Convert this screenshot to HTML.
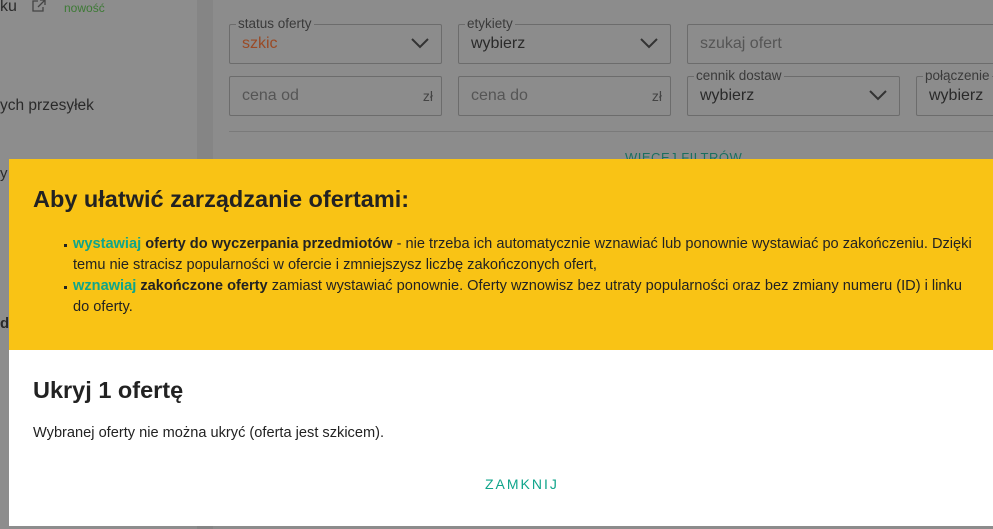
<!DOCTYPE html>
<html><head><meta charset="utf-8"><style>
*{box-sizing:border-box;margin:0;padding:0}
body{width:993px;height:529px;overflow:hidden;position:relative;background:#8c8c8c;font-family:"Liberation Sans","DejaVu Sans",sans-serif;color:#222}
.abs{position:absolute}
.side{left:0;top:0;width:197px;height:529px;background:#8d8d8d}
.gap{left:197px;top:0;width:16px;height:529px;background:#858585}
.fld{position:absolute;border:1px solid #6c6c6c;border-radius:2px;height:40px;font-size:16px;color:#2a2a2a}
.fld .v{position:absolute;left:12px;top:10px}
.fld .lbl{position:absolute;left:6px;top:-9px;background:#8c8c8c;padding:0 2px;font-size:13.5px;color:#3a3a3a}
.fld .ph{color:#555}
.chev{position:absolute;right:12px;top:12px;width:18px;height:12px}
.zl{position:absolute;right:8px;top:11px;font-size:14px;color:#444}
.dlg{left:9px;top:159px;width:984px;height:367px;background:#fff}
.yel{left:0;top:0;width:984px;height:191px;background:#f9c315}
h1{position:absolute;left:24px;top:27px;font-size:23.5px;font-weight:bold;color:#222}
ul{position:absolute;left:64px;top:75px;width:905px;font-size:14.6px;line-height:21px;list-style:none;color:#222}
li{position:relative}
li:before{content:"";position:absolute;left:-9px;top:10px;width:3px;height:3px;background:#222}
.g{color:#10a58b;font-weight:bold}
h2{position:absolute;left:24px;top:218px;font-size:23.5px;font-weight:bold;color:#222}
.p{position:absolute;left:24px;top:266px;font-size:14.6px;color:#222}
.btn{position:absolute;left:476px;top:317px;font-size:14px;letter-spacing:2px;color:#10a58b}
</style></head><body>
<div class="abs side"></div>
<div class="abs gap"></div>
<div class="abs" style="left:0;top:-2px;font-size:16px;color:#2a2a2a">ku</div>
<svg class="abs" style="left:32px;top:0" width="14" height="12" viewBox="0 0 14 12"><path d="M6 1H1v10h10V7M8 0h5v5M13 0L6 7" fill="none" stroke="#444" stroke-width="1.3"/></svg>
<div class="abs" style="left:64px;top:1px;font-size:12px;color:#3d7a35">nowość</div>
<div class="abs" style="left:0;top:97px;font-size:15.5px;color:#2a2a2a">ych przesyłek</div>
<div class="abs" style="left:229px;top:131px;width:764px;height:1px;background:#7a7a7a"></div>
<div class="abs" style="left:625px;top:150px;font-size:13px;color:#1a6f60;letter-spacing:0.5px">WIĘCEJ FILTRÓW</div>

<div class="fld" style="left:229px;top:24px;width:213px"><span class="lbl">status oferty</span><span class="v" style="color:#9a4a25">szkic</span><svg class="chev" viewBox="0 0 18 12"><path d="M1 2l8 8 8-8" fill="none" stroke="#333" stroke-width="2"/></svg></div>
<div class="fld" style="left:458px;top:24px;width:213px"><span class="lbl">etykiety</span><span class="v">wybierz</span><svg class="chev" viewBox="0 0 18 12"><path d="M1 2l8 8 8-8" fill="none" stroke="#333" stroke-width="2"/></svg></div>
<div class="fld" style="left:687px;top:24px;width:320px"><span class="v ph">szukaj ofert</span></div>
<div class="fld" style="left:229px;top:76px;width:213px"><span class="v ph">cena od</span><span class="zl">zł</span></div>
<div class="fld" style="left:458px;top:76px;width:213px"><span class="v ph">cena do</span><span class="zl">zł</span></div>
<div class="fld" style="left:687px;top:76px;width:213px"><span class="lbl">cennik dostaw</span><span class="v">wybierz</span><svg class="chev" viewBox="0 0 18 12"><path d="M1 2l8 8 8-8" fill="none" stroke="#333" stroke-width="2"/></svg></div>
<div class="fld" style="left:916px;top:76px;width:100px"><span class="lbl">połączenie</span><span class="v">wybierz</span></div>

<div class="abs" style="left:0;top:165px;font-size:15px;color:#2a2a2a">y</div>
<div class="abs" style="left:0;top:315px;font-size:15px;font-weight:bold;color:#2a2a2a">d</div>

<div class="abs dlg">
<div class="abs yel">
<h1>Aby ułatwić zarządzanie ofertami:</h1>
<ul>
<li><span class="g">wystawiaj</span> <b>oferty do wyczerpania przedmiotów</b> - nie trzeba ich automatycznie wznawiać lub ponownie wystawiać po zakończeniu. Dzięki temu nie stracisz popularności w ofercie i zmniejszysz liczbę zakończonych ofert,</li>
<li><span class="g">wznawiaj</span> <b>zakończone oferty</b> zamiast wystawiać ponownie. Oferty wznowisz bez utraty popularności oraz bez zmiany numeru (ID) i linku do oferty.</li>
</ul>
</div>
<h2>Ukryj 1 ofertę</h2>
<div class="p">Wybranej oferty nie można ukryć (oferta jest szkicem).</div>
<div class="btn">ZAMKNIJ</div>
</div>
</body></html>
